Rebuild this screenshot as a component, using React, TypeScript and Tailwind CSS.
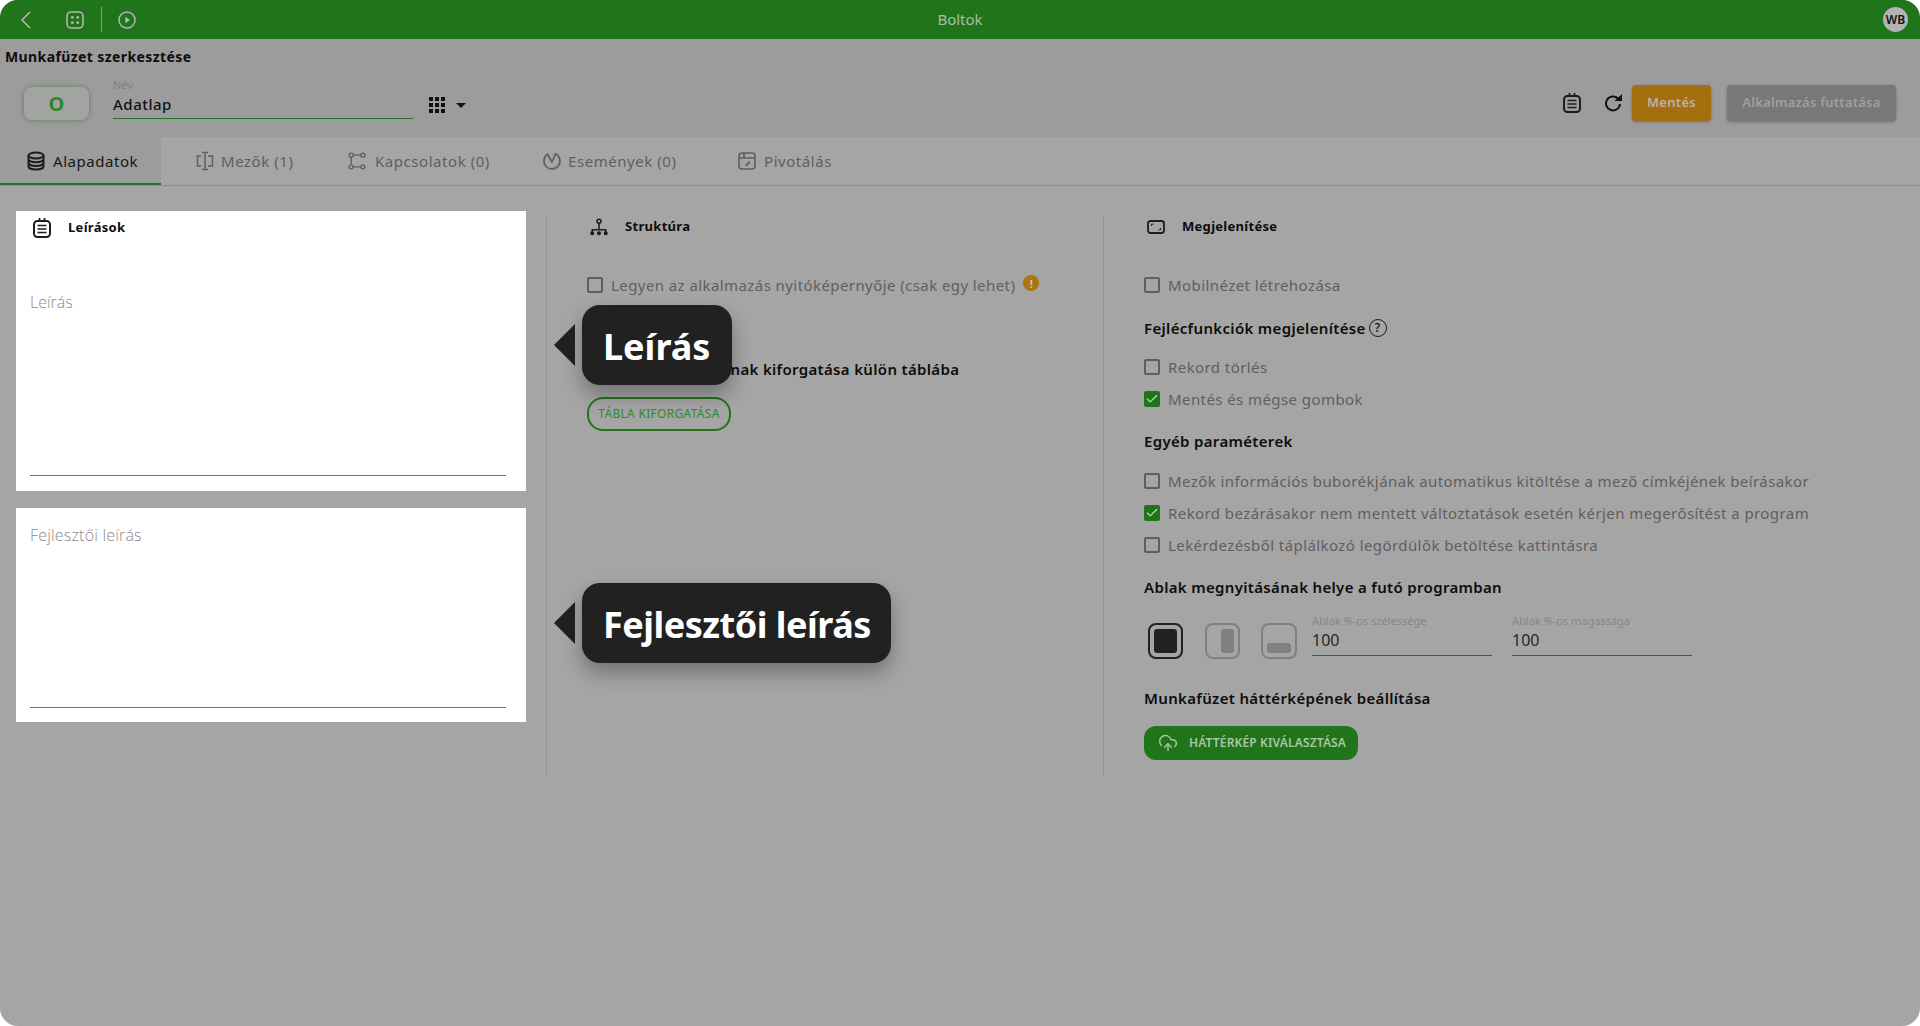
import { CloudUpload, Check } from 'lucide-react';

const font = "font-['Noto_Sans',sans-serif]";

function NotesIcon({ className }: { className?: string }) {
  return (
    <svg viewBox="0 0 18 20" className={className} fill="none" stroke="currentColor" strokeWidth="2">
      <rect x="1" y="3" width="16" height="16" rx="3.5" />
      <path d="M6.5 0v3M11.500 0v3" strokeWidth="1.8" />
      <path d="M4.5 7.500h9M4.500 11h9M4.500 14.500h9" strokeWidth="1.7" />
    </svg>
  );
}

function GridIcon() {
  return (
    <div className="grid grid-cols-3 gap-[2px] w-4 h-4">
      {Array.from({ length: 9 }).map((_, i) => (
        <div key={i} className="bg-[#111]" />
      ))}
    </div>
  );
}

function CheckRow({ label, checked }: { label: string; checked?: boolean }) {
  return (
    <div className="h-8 flex items-center">
      {checked ? (
        <div className="w-4 h-4 rounded-[2px] bg-[#20751b] flex items-center justify-center shrink-0">
          <Check className="w-[14px] h-[14px] text-[#c5dcc3]" strokeWidth={2} />
        </div>
      ) : (
        <div className="w-4 h-4 rounded-[2px] border-2 border-[#5e5e5e] shrink-0" />
      )}
      <span className="ml-2 text-[15px] tracking-[0.42px] text-[#5f5f5f] whitespace-nowrap">{label}</span>
    </div>
  );
}

function Heading({ children, className }: { children: React.ReactNode; className?: string }) {
  return <div className={`h-8 flex items-center text-[15px] tracking-[0.33px] font-semibold text-[#0d0d0d] whitespace-nowrap ${className ?? ''}`}>{children}</div>;
}

function Tab({ label, icon, active, className }: { label: string; icon: React.ReactNode; active?: boolean; className: string }) {
  return (
    <div className={`h-full flex items-center text-[15px] tracking-[0.55px] ${active ? 'bg-[#9c9c9c] border-b-2 border-[#20751b] pt-[2px] text-[#171717]' : 'text-[#5f5f5f]'} ${className}`}>
      {icon}
      <span>{label}</span>
    </div>
  );
}

function SizeInput({ label, className }: { label: string; className?: string }) {
  return (
    <div className={`w-[180px] border-b border-[#20751b] h-[43px] ${className ?? ''}`}>
      <div className="text-[11px] leading-[16px] text-[#868686] whitespace-nowrap">{label}</div>
      <div className="text-[16px] leading-[22px] text-[#2a2a2a]">100</div>
    </div>
  );
}

function Tooltip({ text, className, bubble }: { text: string; className: string; bubble: string }) {
  return (
    <div className={`absolute flex items-center ${className}`}>
      <div className="w-0 h-0 border-y-[21px] border-y-transparent border-r-[21px] border-r-[#212121] mr-[7px]" />
      <div className={`h-20 pl-[21px] pt-[4px] rounded-[18px] bg-[#212121] flex items-center text-white text-[36px] font-bold whitespace-nowrap shadow-[0_10px_20px_rgba(0,0,0,0.3)] ${bubble}`}>
        {text}
      </div>
    </div>
  );
}

export default function App() {
  return (
    <div className={`relative w-full h-screen bg-white overflow-hidden ${font}`}>
      <div className="h-full rounded-[18px] overflow-hidden bg-[#a5a5a5] flex flex-col">
        {/* Top bar */}
        <header className="relative h-[39px] shrink-0 bg-[#20751b] flex items-center text-[#b5b5b5]">
          <svg viewBox="0 0 11 18" className="ml-5 w-[11px] h-[18px]" fill="none" stroke="currentColor" strokeWidth="1.6">
            <path d="M10 1 2 9l8 8" />
          </svg>
          <svg viewBox="0 0 18 18" className="ml-[35px] w-[18px] h-[18px]" fill="none" stroke="currentColor" strokeWidth="1.6">
            <rect x="1" y="1" width="16" height="16" rx="4" />
            <circle cx="6.3" cy="6.3" r="1.4" fill="currentColor" stroke="none" />
            <circle cx="11.7" cy="6.3" r="1.4" fill="currentColor" stroke="none" />
            <circle cx="6.3" cy="11.7" r="1.4" fill="currentColor" stroke="none" />
            <circle cx="11.7" cy="11.7" r="1.4" fill="currentColor" stroke="none" />
          </svg>
          <div className="ml-[17px] w-px h-[25px] bg-[#7da07a]" />
          <svg viewBox="0 0 18 18" className="ml-4 w-[18px] h-[18px]" fill="none" stroke="currentColor" strokeWidth="1.5">
            <circle cx="9" cy="9" r="8" />
            <path d="M7.3 5.800 12 9l-4.700 3.200z" fill="currentColor" stroke="none" />
          </svg>
          <div className="absolute inset-x-0 text-center text-[15px] text-[#a9bda6] pointer-events-none">Boltok</div>
          <div className="ml-auto mr-3 w-[25px] h-[25px] rounded-full bg-[#b3b3b3] flex items-center justify-center text-[12px] font-semibold text-[#111]">WB</div>
        </header>

        {/* Title and name row */}
        <div className="h-[98px] shrink-0 bg-[#9c9c9c] relative">
          <div className="pl-[5px] pt-2 text-[14px] tracking-[0.4px] leading-5 font-bold text-[#0d0d0d]">Munkafüzet szerkesztése</div>
          <div className="flex items-start pl-6 pt-[20px]">
            <div className="w-[65px] h-[33px] rounded-lg bg-[#a3a3a3] shadow-[0_0_5px_rgba(32,117,27,0.6)] flex items-center justify-center text-[20px] font-bold text-[#2b8a24]">O</div>
            <div className="ml-6 w-[300px] h-[44px] -mt-[12px] border-b border-[#20751b] pt-[2px]">
              <div className="text-[11px] leading-4 text-[#808080]">Név</div>
              <div className="text-[15px] tracking-[0.5px] leading-[22px] font-medium text-[#111]">Adatlap</div>
            </div>
            <div className="ml-4 mt-[10px]">
              <GridIcon />
            </div>
            <div className="ml-[11px] mt-[16px] w-0 h-0 border-x-[5px] border-x-transparent border-t-[5px] border-t-[#111]" />
            <div className="ml-auto -mt-[2px] flex items-center pr-6">
              <NotesIcon className="w-[18px] h-5 text-[#1c1c1c]" />
              <svg viewBox="0 0 18 18" className="ml-[23px] w-[18px] h-[18px] text-[#111]" fill="none" stroke="currentColor" strokeWidth="2">
                <path d="M14 4.500A7 7 0 1 0 16 10" />
                <path d="M10.500 7H18V0z" fill="currentColor" stroke="none" />
              </svg>
              <div className="ml-[10px] w-[79px] h-9 rounded bg-[#a56e0f] flex items-center justify-center text-[13px] tracking-[0.3px] font-semibold text-[#b9b3a6] shadow-[0_1px_3px_rgba(0,0,0,0.3)]">Mentés</div>
              <div className="ml-4 w-[169px] h-9 rounded bg-[#777977] flex items-center justify-center text-[13px] tracking-[0.25px] font-semibold text-[#a0a0a0] shadow-[0_1px_3px_rgba(0,0,0,0.3)]">Alkalmazás futtatása</div>
            </div>
          </div>
        </div>

        {/* Tabs */}
        <nav className="h-[49px] shrink-0 flex border-b border-[#8f8f8f]">
          <Tab
            active
            label="Alapadatok"
            className="w-[161px] pl-[26px] gap-[7px]"
            icon={
              <svg viewBox="0 0 20 20" className="w-5 h-5 text-[#1c1c1c]" fill="none" stroke="currentColor" strokeWidth="2">
                <ellipse cx="10" cy="4.500" rx="7.500" ry="3" />
                <path d="M2.500 4.500v11c0 1.700 3.400 3 7.500 3s7.500-1.300 7.500-3v-11M2.500 8.200c0 1.700 3.400 3 7.500 3s7.500-1.300 7.500-3M2.500 12c0 1.700 3.400 3 7.500 3s7.500-1.300 7.500-3" />
              </svg>
            }
          />
          <Tab
            label="Mezők (1)"
            className="w-[187px] pl-[34px] gap-[6px]"
            icon={
              <svg viewBox="0 0 20 20" className="w-5 h-5 text-[#5f5f5f]" fill="none" stroke="currentColor" strokeWidth="1.5">
                <path d="M6 5H2.500v10H6M13 5h4.500v10H13M7 1.500h6M7 18.500h6M10 1.500v17" />
              </svg>
            }
          />
          <Tab
            label="Kapcsolatok (0)"
            className="w-[194px] gap-[9px]"
            icon={
              <svg viewBox="0 0 20 20" className="w-[18px] h-5 text-[#5f5f5f]" fill="none" stroke="currentColor" strokeWidth="1.5">
                <circle cx="3.500" cy="3.500" r="2.200" />
                <circle cx="16.500" cy="3.500" r="2.200" />
                <circle cx="3.500" cy="16.500" r="2.200" />
                <circle cx="16.500" cy="16.500" r="2.200" />
                <path d="M5.700 3.500h8.600M5.700 16.500h8.600M3.500 5.700v8.600" />
              </svg>
            }
          />
          <Tab
            label="Események (0)"
            className="w-[195px] gap-[6px]"
            icon={
              <svg viewBox="0 0 20 20" className="w-5 h-5 text-[#5f5f5f]" fill="none" stroke="currentColor" strokeWidth="1.7">
                <path d="M13.500 2.800A8 8 0 1 1 5.500 3.300L10 11z" strokeLinejoin="round" />
              </svg>
            }
          />
          <Tab
            label="Pivotálás"
            className="w-[110px] gap-[7px]"
            icon={
              <svg viewBox="0 0 20 20" className="w-5 h-5 text-[#5f5f5f]" fill="none" stroke="currentColor" strokeWidth="1.6">
                <rect x="2" y="2" width="16" height="16" rx="3" />
                <path d="M2 7h16M7 2v5" />
                <path d="M9 14.500l3.500-3.500M12.500 13v-2h-2M9 12.500v2h2" strokeWidth="1.100" />
              </svg>
            }
          />
        </nav>

        {/* Body */}
        <div className="flex pl-4 pt-[25px]">
          <div className="w-[510px] flex flex-col gap-[17px] shrink-0">
            <div className="h-[280px] bg-white px-[14px] flex flex-col font-['Open_Sans',sans-serif]">
              <div className={`flex items-center h-8 pt-[2px] pl-[3px] ${font}`}>
                <NotesIcon className="w-[18px] h-5 text-[#1c1c1c]" />
                <span className="ml-[17px] text-[13px] tracking-[0.3px] font-bold text-[#0d0d0d]">Leírások</span>
              </div>
              <div className="mt-[49px] text-[16px] leading-5 font-light text-[#8a8a8a]">Leírás</div>
              <div className="mt-[163px] w-[476px] border-b border-[#35a52b]" />
            </div>
            <div className="h-[214px] bg-white px-[14px] flex flex-col font-['Open_Sans',sans-serif]">
              <div className="mt-[17px] text-[16px] tracking-[0.2px] leading-5 font-light text-[#8a8a8a]">Fejlesztői leírás</div>
              <div className="mt-[162px] w-[476px] border-b border-[#35a52b]" />
            </div>
          </div>

          <div className="ml-5 mt-[5px] w-[557px] h-[560px] border-l border-[#949494] pl-10 shrink-0">
            <div className="h-[22px] flex items-center pl-[3px]">
              <svg viewBox="0 0 20 20" className="w-[18px] h-[18px] text-[#1c1c1c]" fill="none" stroke="currentColor" strokeWidth="1.7">
                <circle cx="10" cy="3.500" r="2.200" />
                <path d="M10 5.700V13M2.500 15.500V13h15v2.500" />
                <circle cx="2.500" cy="17" r="1.400" fill="currentColor" />
                <circle cx="10" cy="17" r="1.400" fill="currentColor" />
                <circle cx="17.500" cy="17" r="1.400" fill="currentColor" />
              </svg>
              <span className="ml-[17px] text-[13px] tracking-[0.3px] font-bold text-[#0d0d0d]">Struktúra</span>
            </div>
            <div className="mt-[31px] flex items-center">
              <CheckRow label="Legyen az alkalmazás nyitóképernyője (csak egy lehet)" />
              <div className="ml-2 -mt-[4px] w-4 h-4 rounded-full bg-[#ae7410] flex items-center justify-center text-[11px] font-bold leading-none text-[#c4c4c4]">!</div>
            </div>
            <Heading className="mt-[52px]">Munkafüzet adatainak kiforgatása külön táblába</Heading>
            <div className="mt-3 w-[144px] h-[34px] rounded-2xl border-2 border-[#20751b] flex items-center justify-center text-[12px] tracking-[0.3px] text-[#2f8a28]">TÁBLA KIFORGATÁSA</div>
          </div>

          <div className="mt-[5px] h-[560px] border-l border-[#949494] pl-10 flex-1">
            <div className="h-[22px] flex items-center pl-[3px]">
              <svg viewBox="0 0 18 14" className="w-[18px] h-[14px] text-[#1c1c1c]" fill="none" stroke="currentColor" strokeWidth="1.8">
                <rect x="1" y="1" width="16" height="12" rx="2.500" />
                <path d="M4.500 6V4.200h2M13.500 8v1.800h-2" strokeWidth="1" />
              </svg>
              <span className="ml-[17px] text-[13px] tracking-[0.3px] font-bold text-[#0d0d0d]">Megjelenítése</span>
            </div>
            <div className="mt-[31px]">
              <CheckRow label="Mobilnézet létrehozása" />
            </div>
            <Heading className="mt-[11px]">
              Fejlécfunkciók megjelenítése
              <span className="ml-[3px] w-[18px] h-[18px] rounded-full border-[1.5px] border-[#1c1c1c] flex items-center justify-center text-[12px] leading-none font-medium">?</span>
            </Heading>
            <div className="mt-[7px]">
              <CheckRow label="Rekord törlés" />
              <CheckRow label="Mentés és mégse gombok" checked />
            </div>
            <Heading className="mt-[10px]">Egyéb paraméterek</Heading>
            <div className="mt-2">
              <CheckRow label="Mezők információs buborékjának automatikus kitöltése a mező címkéjének beírásakor" />
              <CheckRow label="Rekord bezárásakor nem mentett változtatások esetén kérjen megerősítést a program" checked />
              <CheckRow label="Lekérdezésből táplálkozó legördülők betöltése kattintásra" />
            </div>
            <Heading className="mt-[10px]">Ablak megnyitásának helye a futó programban</Heading>
            <div className="mt-[10px] flex items-start h-[46px]">
              <div className="mt-[10px] ml-[4px] w-[35px] h-9 rounded-lg border-2 border-[#222] p-[4px] flex">
                <div className="flex-1 rounded-[3px] bg-[#222]" />
              </div>
              <div className="mt-[10px] ml-[22px] w-[35px] h-9 rounded-lg border-2 border-[#808080] p-[4px] flex justify-end">
                <div className="w-[13px] rounded-[3px] bg-[#808080]" />
              </div>
              <div className="mt-[10px] ml-[21px] w-[36px] h-9 rounded-lg border-2 border-[#808080] p-[4px] flex items-end">
                <div className="w-full h-[10px] rounded-[3px] bg-[#808080]" />
              </div>
              <SizeInput label="Ablak %-os szélessége" className="ml-[15px]" />
              <SizeInput label="Ablak %-os magassága" className="ml-5" />
            </div>
            <Heading className="mt-[23px]">Munkafüzet háttérképének beállítása</Heading>
            <div className="mt-3 w-[214px] h-[34px] rounded-xl bg-[#20751b] flex items-center pl-[14px] text-[12px] tracking-[0.15px] font-semibold text-[#a9c7a5]">
              <CloudUpload className="w-5 h-5" strokeWidth={1.7} />
              <span className="ml-[11px] whitespace-nowrap">HÁTTÉRKÉP KIVÁLASZTÁSA</span>
            </div>
          </div>
        </div>
      </div>

      <Tooltip text="Leírás" className="left-[554px] top-[305px]" bubble="w-[150px]" />
      <Tooltip text="Fejlesztői leírás" className="left-[554px] top-[583px]" bubble="w-[309px] tracking-[-0.5px]" />
    </div>
  );
}
